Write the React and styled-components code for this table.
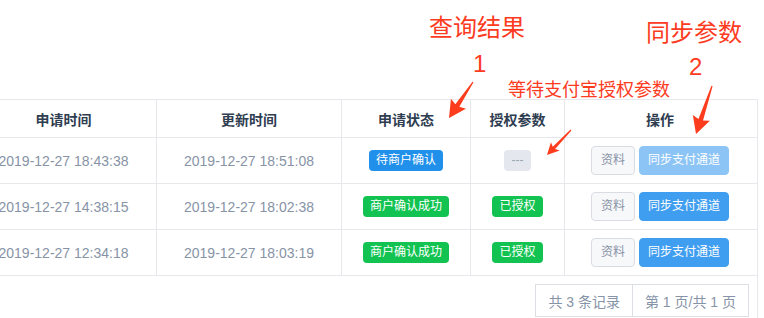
import React from 'react';
import styled, { createGlobalStyle } from 'styled-components';

const GlobalStyle = createGlobalStyle`
    html, body {
        margin: 0;
        padding: 0;
        background: #ffffff;
    }
    body {
        font-family: "Liberation Sans", "Noto Sans CJK SC", sans-serif;
    }
`;

const Page = styled.div`
    position: relative;
    width: 764px;
    height: 318px;
    overflow: hidden;
    background: #ffffff;
    padding-top: 99px;
    box-sizing: border-box;
`;

const Panel = styled.div`
    width: 786px;
    margin-left: -30px;
    border: 1px solid #e6e8eb;
    border-bottom: none;
    height: 240px;
`;

const Row = styled.div`
    display: grid;
    grid-template-columns: 186px 185px 129px 94px 190px;
    height: ${p => (p.$head ? '38px' : '46px')};
    border-bottom: 1px solid #e6e8eb;
    box-sizing: border-box;
`;

const Cell = styled.div`
    display: flex;
    align-items: center;
    justify-content: center;
    gap: 4px;
    border-right: 1px solid #e6e8eb;
    font-size: 14px;
    color: ${p => (p.$head ? '#2f3d51' : '#8793a6')};
    font-weight: ${p => (p.$head ? 600 : 400)};
    white-space: nowrap;
    &:last-child {
        border-right: none;
    }
`;

const badgeColors = {
    blue: ['#2190ea', '#ffffff'],
    green: ['#12c351', '#ffffff'],
    grey: ['#e4e8ee', '#9ba4b1'],
};

const Badge = styled.span`
    display: inline-block;
    height: 21px;
    line-height: 21px;
    padding: 0 7px;
    min-width: 13px;
    text-align: center;
    border-radius: 4px;
    font-size: 12px;
    background: ${p => badgeColors[p.$tone][0]};
    color: ${p => badgeColors[p.$tone][1]};
`;

const Button = styled.button`
    height: 29px;
    padding: 0 ${p => (p.$primary ? '8px' : '9px')};
    border-radius: 4px;
    font-family: inherit;
    font-size: 12px;
    line-height: 27px;
    cursor: pointer;
    border: 1px solid ${p => (p.$primary ? (p.disabled ? '#8cc4f6' : '#3f9ef0') : '#d9dde3')};
    background: ${p => (p.$primary ? (p.disabled ? '#8cc4f6' : '#3f9ef0') : '#f7f8fa')};
    color: ${p => (p.$primary ? '#ffffff' : '#8793a6')};
`;

const Footer = styled.div`
    display: flex;
    justify-content: flex-end;
    padding: 8px 8px 0 0;
`;

const Pager = styled.div`
    display: flex;
    border: 1px solid #dcdfe4;
    height: 33px;
    box-sizing: border-box;
`;

const PagerItem = styled.span`
    display: flex;
    align-items: center;
    padding: 0 12px;
    font-size: 14px;
    color: #8793a6;
    & + & {
        border-left: 1px solid #dcdfe4;
    }
`;

const Notes = styled.div`
    position: absolute;
    inset: 0;
    pointer-events: none;
`;

const Note = styled.span`
    position: absolute;
    color: #fd3b1e;
    font-size: ${p => p.$size || 24}px;
    line-height: ${p => p.$size || 24}px;
    white-space: nowrap;
`;

const rows = [
    {
        applied: '2019-12-27 18:43:38',
        updated: '2019-12-27 18:51:08',
        status: ['待商户确认', 'blue'],
        auth: ['---', 'grey'],
        pending: true,
    },
    {
        applied: '2019-12-27 14:38:15',
        updated: '2019-12-27 18:02:38',
        status: ['商户确认成功', 'green'],
        auth: ['已授权', 'green'],
    },
    {
        applied: '2019-12-27 12:34:18',
        updated: '2019-12-27 18:03:19',
        status: ['商户确认成功', 'green'],
        auth: ['已授权', 'green'],
    },
];

// tapered markup arrow from tail (x1,y1) to tip (x2,y2)
const arrowPoints = (x1, y1, x2, y2, head, wing, shaft) => {
    const len = Math.hypot(x2 - x1, y2 - y1);
    const dx = (x2 - x1) / len;
    const dy = (y2 - y1) / len;
    const nx = -dy;
    const ny = dx;
    const bx = x2 - dx * head;
    const by = y2 - dy * head;
    const pts = [
        [x1 + nx * 0.6, y1 + ny * 0.6],
        [bx + nx * shaft, by + ny * shaft],
        [bx + nx * wing - dx * 2, by + ny * wing - dy * 2],
        [x2, y2],
        [bx - nx * wing - dx * 2, by - ny * wing - dy * 2],
        [bx - nx * shaft, by - ny * shaft],
        [x1 - nx * 0.6, y1 - ny * 0.6],
    ];
    return pts.map(p => p.join(',')).join(' ');
};

const App = () => {
    return (
        <>
            <GlobalStyle />
            <Page>
                <Panel>
                    <Row $head>
                        <Cell $head>申请时间</Cell>
                        <Cell $head>更新时间</Cell>
                        <Cell $head>申请状态</Cell>
                        <Cell $head>授权参数</Cell>
                        <Cell $head>操作</Cell>
                    </Row>
                    {rows.map((r, i) => (
                        <Row key={i}>
                            <Cell>{r.applied}</Cell>
                            <Cell>{r.updated}</Cell>
                            <Cell><Badge $tone={r.status[1]}>{r.status[0]}</Badge></Cell>
                            <Cell><Badge $tone={r.auth[1]}>{r.auth[0]}</Badge></Cell>
                            <Cell>
                                <Button>资料</Button>
                                <Button $primary disabled={r.pending}>同步支付通道</Button>
                            </Cell>
                        </Row>
                    ))}
                    <Footer>
                        <Pager>
                            <PagerItem>共 3 条记录</PagerItem>
                            <PagerItem>第 1 页/共 1 页</PagerItem>
                        </Pager>
                    </Footer>
                </Panel>

                <Notes>
                    <Note style={{ left: 429, top: 16 }}>查询结果</Note>
                    <Note style={{ left: 473, top: 52 }}>1</Note>
                    <Note style={{ left: 646, top: 21 }}>同步参数</Note>
                    <Note style={{ left: 689, top: 55 }}>2</Note>
                    <Note $size={18} style={{ left: 508, top: 81 }}>等待支付宝授权参数</Note>
                    <svg width="764" height="318" viewBox="0 0 764 318">
                        <g fill="#fc3c1c">
                            <polygon points={arrowPoints(473, 82, 449, 118, 15, 9, 2.4)} />
                            <polygon points={arrowPoints(712, 86, 696, 134, 15, 9, 2.4)} />
                            <polygon points={arrowPoints(571, 130, 547, 155, 10, 6, 1.6)} />
                        </g>
                    </svg>
                </Notes>
            </Page>
        </>
    );
};

export default App;
